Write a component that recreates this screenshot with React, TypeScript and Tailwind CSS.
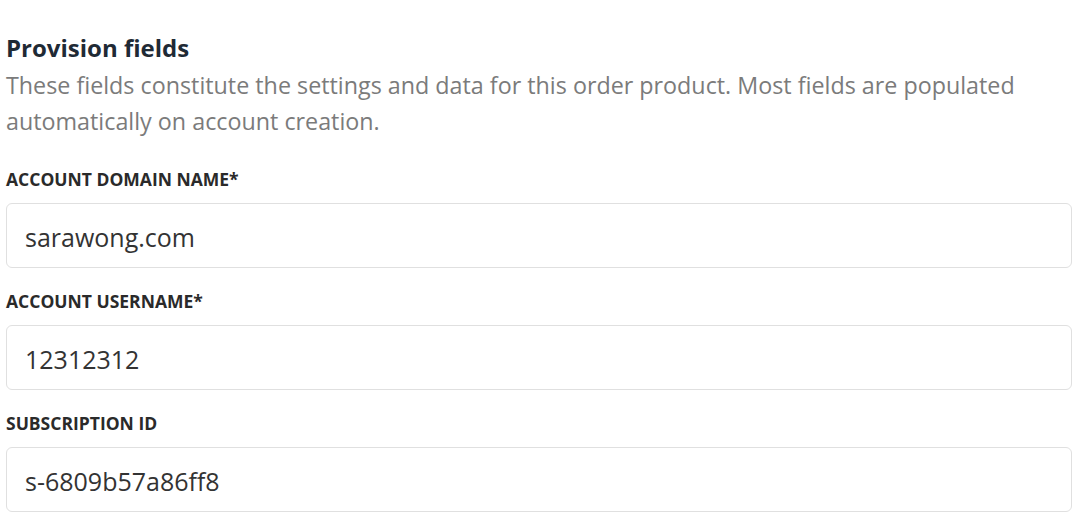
import React from "react";

const fields = [
  { label: "ACCOUNT DOMAIN NAME*", value: "sarawong.com" },
  { label: "ACCOUNT USERNAME*", value: "12312312" },
  { label: "SUBSCRIPTION ID", value: "s-6809b57a86ff8" },
];

export default function App() {
  return (
    <div
      className="w-[1088px] h-[528px] bg-white pl-[6px] pr-[16px] pt-[32px] overflow-hidden"
      style={{ fontFamily: '"Open Sans", "Noto Sans", sans-serif' }}
    >
      <h2 className="text-[24px] leading-[32px] font-bold text-[#1f2a35]">Provision fields</h2>
      <p className="text-[23.3px] leading-[36px] text-[#7b7b7b] mt-[3px]">
        These fields constitute the settings and data for this order product. Most fields are populated automatically on account creation.
      </p>
      <div className="mt-[28px] flex flex-col gap-[21px]">
        {fields.map((f) => (
          <div key={f.label} className="flex flex-col gap-[12px]">
            <label className="text-[17.5px] leading-[24px] font-bold text-[#2a2a2a]">{f.label}</label>
            <div className="h-[65px] border border-[#e0e0e0] rounded-[6px] px-[18px] pt-[3px] flex items-center text-[25px] leading-[34px] text-[#333]">
              {f.value}
            </div>
          </div>
        ))}
      </div>
    </div>
  );
}
